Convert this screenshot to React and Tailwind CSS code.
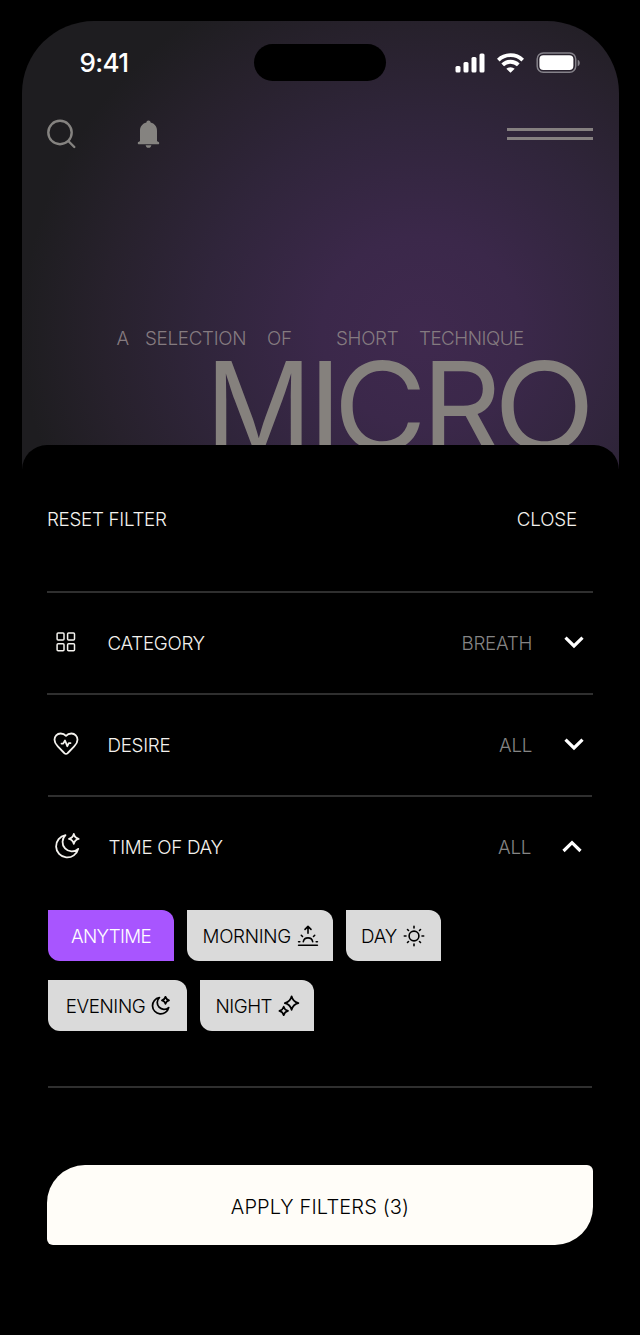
const thin = { fill: "none", stroke: "currentColor", strokeLinecap: "round", strokeLinejoin: "round" };

function GridIcon() {
  return (
    <svg width="20" height="20" viewBox="0 0 20 20" {...thin} strokeWidth="1.5">
      <rect x="1.1" y="1" width="6.9" height="7.1" rx="1" />
      <rect x="11.6" y="1" width="6.9" height="7.1" rx="1" />
      <rect x="1.1" y="11.7" width="6.9" height="7.1" rx="1" />
      <rect x="11.6" y="11.7" width="6.9" height="7.1" rx="1" />
    </svg>
  );
}

function HeartIcon() {
  return (
    <svg width="26" height="24" viewBox="0 0 26 24" {...thin} strokeWidth="1.8">
      <path d="M13 3.800C11.600 2.200 9.700 1.500 7.600 1.500 4 1.500 1.500 4.300 1.500 7.800c0 2.500 1.300 4.600 3.300 6.600l6.400 6.600c1.100 1.200 2.500 1.200 3.600 0l6.400-6.600c2-2 3.300-4.100 3.300-6.600 0-3.500-2.500-6.300-6.100-6.300C16.300 1.500 14.400 2.200 13 3.800z" />
      <path d="M8.500 11.600h1.700L12 8.500l2.300 5.700 1.500-3.100h1.700" />
    </svg>
  );
}

function MoonIcon({ size, weight }) {
  return (
    <svg width={size} height={size} viewBox="0 0 26 26" {...thin} strokeWidth={weight}>
      <path d="M11.500 2.200A11.200 11.200 0 1 0 24.200 15.800 8.900 8.900 0 1 1 11.500 2.200z" />
      <path d="M19.800 1q.9 3.800 4.800 4.900-3.900 1.100-4.800 4.900-.9-3.800-4.800-4.900 3.900-1.100 4.800-4.900z" />
    </svg>
  );
}

function SunriseIcon() {
  return (
    <svg width="22" height="22" viewBox="0 0 22 22" {...thin} strokeWidth="1.6">
      <path d="M1.600 20.200h18.800M1.600 16.700h1.200M19.200 16.700h1.200M4.300 10.300l1.200 1.200M17.700 10.300l-1.200 1.200M6.300 16.700a4.800 4.800 0 0 1 9.400 0M11 8.200V1.600M8 4.400l3-3 3 3" />
    </svg>
  );
}

function SunIcon() {
  return (
    <svg width="22" height="22" viewBox="0 0 22 22" {...thin} strokeWidth="1.600">
      <circle cx="11" cy="11" r="4.900" />
      <path d="M11 1.300v1.700M11 19v1.700M1.300 11h1.700M19 11h1.700M4.500 4.500l1 1M16.500 16.500l1 1M17.500 4.500l-1 1M5.500 16.500l-1 1" />
    </svg>
  );
}

function SparklesIcon() {
  return (
    <svg width="22" height="22" viewBox="0 0 22 22" {...thin} strokeWidth="1.700">
      <path d="M13.600 1.300q1.200 5.400 6.800 6.800-5.600 1.400-6.800 6.800-1.200-5.400-6.800-6.800 5.600-1.400 6.800-6.800z" />
      <path d="M5.700 11.600q.9 3.400 4.300 4.300-3.400.9-4.300 4.300-.9-3.400-4.300-4.300 3.400-.9 4.300-4.300z" />
    </svg>
  );
}

function Chevron({ up }) {
  return (
    <svg width="22" height="14" viewBox="0 0 22 14" fill="none" stroke="#fff" strokeWidth="3.200">
      <path d={up ? "M2.500 11 11 2.700l8.500 8.300" : "M2.500 2.600 11 10.900l8.500-8.300"} />
    </svg>
  );
}

function StatusBar() {
  return (
    <div className="flex h-[37px] items-center justify-between">
      <div className="w-[207px] pt-px pl-[33px] text-[26px] font-medium leading-none tracking-[-0.6px] text-white">9:41</div>
      <div className="h-[37px] w-[132px] rounded-full bg-black" />
      <div className="flex w-[207px] items-center justify-end gap-[12px] pr-[13px]">
        <svg width="30" height="20" viewBox="0 0 30 20" fill="#fff">
          <rect x="0.500" y="13" width="5" height="6.500" rx="1.500" />
          <rect x="8.500" y="9" width="5" height="10.500" rx="1.500" />
          <rect x="16.500" y="4" width="5" height="15.500" rx="1.500" />
          <rect x="24.500" y="0.500" width="5" height="19" rx="1.500" />
        </svg>
        <svg width="27" height="20" viewBox="0 0 27 20" fill="none" stroke="#fff" strokeWidth="3.800">
          <path d="M1.300 7.100a17.600 17.600 0 0 1 24.400 0M5.700 11.900a11.200 11.200 0 0 1 15.600 0" />
          <path d="M13.500 19.800 9.300 15.800a6.200 6.200 0 0 1 8.400 0z" fill="#fff" stroke="none" />
        </svg>
        <svg width="45" height="22" viewBox="0 0 45 22" fill="none">
          <rect x="1.200" y="1" width="38.500" height="19.200" rx="6" stroke="#85828a" strokeWidth="1.500" />
          <rect x="3.400" y="3.200" width="34" height="14.900" rx="4" fill="#fff" />
          <path d="M41.700 7.800v6.500c1.300-.5 2.100-1.700 2.100-3.200S43 8.300 41.700 7.800z" fill="#85828a" />
        </svg>
      </div>
    </div>
  );
}

function Toolbar() {
  return (
    <div className="mt-[38px] flex h-[30px] items-center justify-between">
      <div className="flex items-center gap-[60px]">
        <svg width="30" height="30" viewBox="0 0 30 30" fill="none" stroke="#858380" strokeWidth="2.400" strokeLinecap="round">
          <circle cx="13" cy="13.500" r="11.700" />
          <path d="m21.300 22 6 6" />
        </svg>
        <svg width="23" height="28" viewBox="0 0 23 28" fill="#858380">
          <path d="M11.500.5c1.300 0 2 .9 2.100 2.100 3.900 1 6.400 4 6.400 8.100v9.800c0 .7.300 1 1.100 1.300.9.300 1.100.8 1.100 1.400 0 .7-.4 1-1 1H1.800c-.6 0-1-.3-1-1 0-.6.200-1.100 1.100-1.400.8-.3 1.100-.6 1.100-1.300v-9.800c0-4.100 2.500-7.100 6.400-8.100C9.500 1.400 10.200.5 11.500.5z" />
          <path d="M8.600 25.200h5.800c-.3 1.600-1.400 2.600-2.900 2.600s-2.600-1-2.900-2.600z" />
        </svg>
      </div>
      <div className="flex flex-col gap-[6px] pr-px">
        <div className="h-[3px] w-[86px] bg-[#858080]" />
        <div className="h-[3px] w-[86px] bg-[#858080]" />
      </div>
    </div>
  );
}

function Row({ icon, label, value, open }) {
  return (
    <div className={open ? "mx-px flex h-[102px] items-center border-t-2 border-[#2f2f2f]" : "flex h-[102px] items-center border-t-2 border-[#2f2f2f]"}>
      <div className="flex w-[38px] justify-center pb-[2px]">{icon}</div>
      <div className="ml-[22.500px] flex-1 pt-[3px]">{label}</div>
      <div className="pt-[3px] text-[#858585]">{value}</div>
      <div className={open ? "mr-[9px] ml-[30px] pb-px" : "mr-[8px] ml-[31px] pb-[2px]"}>
        <Chevron up={open} />
      </div>
    </div>
  );
}

function Chip({ label, icon, className }) {
  return (
    <button className={`flex h-[51px] items-center justify-center gap-[6px] rounded-tr-[12px] rounded-bl-[12px] ${className}`}>
      <span className="pt-[3px]">{label}</span>
      {icon}
    </button>
  );
}

export default function App() {
  return (
    <div className="h-[1335px] w-[640px] overflow-hidden bg-black px-[21.500px] pt-[21px] font-['Inter',sans-serif] text-[18.800px] font-light leading-none tracking-[-0.3px] text-[#f4f2ee]">
      <header className="h-[448px] overflow-hidden rounded-t-[72px] bg-[#1e1e20] bg-[radial-gradient(ellipse_400px_380px_at_400px_310px,#3f294e_0%,#3b284a_25%,#30253b_55%,#27212c_80%,#1e1d20_100%)] px-[25px] pt-[23px]">
        <StatusBar />
        <Toolbar />
        <div className="mt-[181px] flex pl-[70px] text-[18.800px] whitespace-nowrap text-[#857b80]">
          <span className="w-[28.500px]">A</span>
          <span className="w-[122px]">SELECTION</span>
          <span className="w-[69px]">OF</span>
          <span className="w-[83px]">SHORT</span>
          <span className="tracking-[-0.500px]">TECHNIQUE</span>
        </div>
        <div className="-mt-[4.500px] mr-[3px] flex justify-end text-[124px] font-normal leading-[124px] tracking-[-4px] text-[#85817d]">
          <span className="inline-block origin-right scale-x-[0.95]">M</span>
          <span>I</span>
          <span className="-ml-[2px] mr-[-0.500px] inline-block origin-right scale-x-[1.030]">C</span>
          <span className="mr-[2px]">R</span>
          <span className="inline-block origin-right scale-x-[1.070]">O</span>
        </div>
      </header>
      <main className="relative -mt-[24px] h-[890px] rounded-t-[25px] bg-black px-[25.500px]">
        <div className="flex h-[146px] items-center justify-between pt-[4px] pr-[16px]">
          <button>RESET FILTER</button>
          <button className="tracking-[-0.150px]">CLOSE</button>
        </div>
        <Row icon={<GridIcon />} label="CATEGORY" value="BREATH" />
        <Row icon={<HeartIcon />} label="DESIRE" value="ALL" />
        <Row icon={<MoonIcon size={26} weight={1.8} />} label="TIME OF DAY" value="ALL" open />
        <section className="mx-px mt-[13px] flex h-[178px] flex-col gap-[19px] border-b-2 border-[#2f2f2f] text-black">
          <div className="flex gap-[12.500px]">
            <Chip label="ANYTIME" className="w-[126px] bg-[#a855ff] tracking-[-0.700px] text-white" />
            <Chip label="MORNING" icon={<SunriseIcon />} className="w-[146.500px] bg-[#dadada] pl-[2px]" />
            <Chip label="DAY" icon={<SunIcon />} className="w-[95px] bg-[#dadada]" />
          </div>
          <div className="flex gap-[12.500px]">
            <Chip label="EVENING" icon={<MoonIcon size={19} weight={2.4} />} className="w-[139px] bg-[#dadada] pl-px tracking-[-0.400px]" />
            <Chip label="NIGHT" icon={<SparklesIcon />} className="w-[114.500px] bg-[#dadada] pl-[2px] tracking-[-0.500px]" />
          </div>
        </section>
        <button className="mt-[77px] flex h-[80px] w-full items-center justify-center rounded-tl-[38px] rounded-tr-[6px] rounded-br-[38px] rounded-bl-[6px] bg-[#fffdf8] pt-[4px] text-[20px] tracking-[0.150px] text-black">
          APPLY FILTERS (3)
        </button>
      </main>
    </div>
  );
}
